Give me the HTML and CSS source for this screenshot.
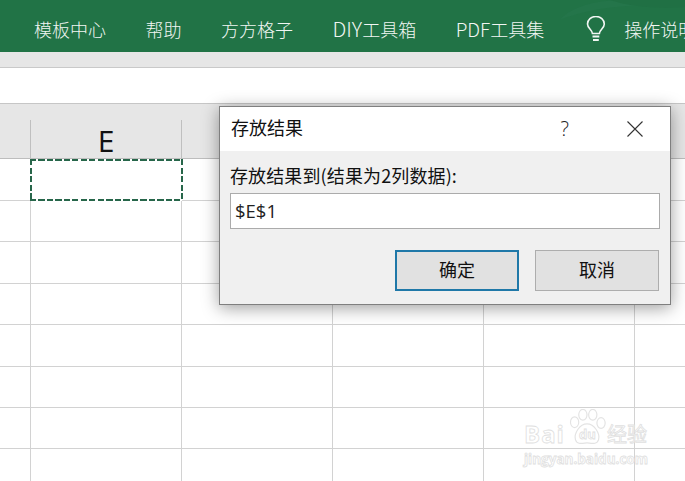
FILE: index.html
```html
<!DOCTYPE html>
<html lang="zh-CN">
<head>
<meta charset="utf-8">
<title>存放结果</title>
<link rel="stylesheet" href="styles.css">
</head>
<body>
<div class="app">
  <header class="ribbon">
    <svg class="ribbon-art" width="125" height="20" viewBox="0 0 125 20"><path d="M0 20C10 8 30 2 55 0H125V7C90 4 50 6 30 11C18 14 8 16 0 20Z" fill="#24754a"/><path d="M50 0C70 7 100 9 125 7V0Z" fill="#207044"/></svg>
    <nav class="tabs">
      <span>模板中心</span><span>帮助</span><span>方方格子</span><span><span class="lat-a">DIY</span>工具箱</span><span><span class="lat-b">PDF</span>工具集</span>
    </nav>
    <div class="tell">
      <svg class="bulb" width="20" height="26" viewBox="0 0 20 26" fill="none" stroke="#f1f6f3" stroke-width="1.600"><path d="M6.400 17.500C6 13.500 1.500 12.300 1.500 8A8.300 7.400 0 0 1 18.300 8C18.300 12.300 13.800 13.500 13.400 17.500Z"/><path d="M6.500 20.500H13.300M7 24H12.800" stroke-width="2"/></svg>
      <span>操作说明搜索</span>
    </div>
  </header>
  <div class="band"></div>
  <div class="formula"></div>
  <div class="sheet">
    <div class="head">
      <div class="hcell hcell-first"></div>
      <div class="hcell">E</div>
      <div class="hcell"></div>
      <div class="hcell"></div>
      <div class="hcell"></div>
      <div class="hcell"></div>
    </div>
    <div class="grid">
      <div class="cell cell-first"></div><div class="cell selected"></div><div class="cell"></div><div class="cell"></div><div class="cell"></div><div class="cell"></div>
      <div class="cell cell-first"></div><div class="cell"></div><div class="cell"></div><div class="cell"></div><div class="cell"></div><div class="cell"></div>
      <div class="cell cell-first"></div><div class="cell"></div><div class="cell"></div><div class="cell"></div><div class="cell"></div><div class="cell"></div>
      <div class="cell cell-first"></div><div class="cell"></div><div class="cell"></div><div class="cell"></div><div class="cell"></div><div class="cell"></div>
      <div class="cell cell-first"></div><div class="cell"></div><div class="cell"></div><div class="cell"></div><div class="cell"></div><div class="cell"></div>
      <div class="cell cell-first"></div><div class="cell"></div><div class="cell"></div><div class="cell"></div><div class="cell"></div><div class="cell"></div>
      <div class="cell cell-first"></div><div class="cell"></div><div class="cell"></div><div class="cell"></div><div class="cell"></div><div class="cell"></div>
      <div class="cell cell-first"></div><div class="cell"></div><div class="cell"></div><div class="cell"></div><div class="cell"></div><div class="cell"></div>
    </div>
  </div>

  <section class="dialog">
    <div class="dialog-title">
      <span class="title-text">存放结果</span>
      <span class="help">?</span>
      <svg class="close" width="16" height="16" viewBox="0 0 16 16" stroke="#333" stroke-width="1.100"><path d="M.5.5 15.500 15.500M15.500.5.5 15.500"/></svg>
    </div>
    <div class="dialog-body">
      <label class="field-label">存放结果到(结果为2列数据):</label>
      <div class="field">$E$1</div>
      <div class="actions">
        <button class="btn btn-default">确定</button>
        <button class="btn">取消</button>
      </div>
    </div>
  </section>

  <div class="watermark">
    <div class="wm-top">
      <span class="wm-word">Bai</span>
      <span class="wm-paw">
        <svg width="40" height="38" viewBox="0 0 48 46" fill="none" stroke="#e3e3e3" stroke-width="1.400"><ellipse cx="9" cy="16" rx="5" ry="6.500"/><ellipse cx="19" cy="7" rx="5" ry="6.500"/><ellipse cx="31" cy="7" rx="5" ry="6.500"/><ellipse cx="41" cy="17" rx="5" ry="6.500"/><path d="M24 18C33 18 40 30 38 37C36 44 28 41 24 41C20 41 12 44 10 37C8 30 15 18 24 18Z"/></svg>
        <span class="wm-du">du</span>
      </span>
      <span class="wm-cn">经验</span>
    </div>
    <div class="wm-url">jingyan.baidu.com</div>
  </div>
</div>
</body>
</html>
```
FILE: styles.css
```css
* { box-sizing: border-box; }
html, body { margin: 0; padding: 0; }
body {
  width: 685px;
  height: 481px;
  overflow: hidden;
  background: #fff;
  font-family: "Noto Sans CJK SC", "Open Sans", sans-serif;
}
.app { position: relative; width: 685px; height: 481px; overflow: hidden; }

.ribbon {
  position: relative;
  height: 52px;
  background: #217346;
  color: #f1f6f3;
  display: flex;
  align-items: center;
  padding: 5px 0 0 34px;
  font-size: 18px;
  font-weight: 300;
  white-space: nowrap;
  overflow: hidden;
}
.ribbon-art { position: absolute; right: 0; top: 0; }
.tabs { position: relative; display: flex; gap: 39.500px; }
.lat-a { font-size: 20.500px; line-height: 18px; }
.lat-b { font-size: 19px; line-height: 18px; }
.tell { position: relative; display: flex; align-items: center; gap: 18px; margin-left: 42px; }
.bulb { margin-top: 1px; }

.band { height: 16px; background: #e6e6e6; border-bottom: 1px solid #c9c9c9; }
.formula { height: 36px; background: #fff; border-bottom: 1px solid #c6c6c6; }

.sheet { height: 377px; }
.head {
  display: grid;
  grid-template-columns: 31px repeat(5, 151px);
  height: 55px;
  padding-top: 16px;
  background: #e6e6e6;
  border-bottom: 1px solid #bdbdbd;
}
.hcell {
  border-right: 1px solid #bfbfbf;
  font-family: "Open Sans", sans-serif;
  font-size: 30px;
  line-height: 42px;
  text-align: center;
  color: #111;
}
.grid {
  display: grid;
  grid-template-columns: 31px repeat(5, 151px);
  grid-template-rows: 42px;
  grid-auto-rows: 41.400px;
}
.cell { border-right: 1px solid #d2d2d2; border-bottom: 1px solid #d2d2d2; }
.selected {
  margin: 0 -1px 0 -1px;
  border: 0;
  background:
    repeating-linear-gradient(90deg, #27664a 0 6px, transparent 6px 8.500px) left top / 100% 2px no-repeat,
    repeating-linear-gradient(90deg, #27664a 0 6px, transparent 6px 8.500px) left bottom / 100% 2px no-repeat,
    repeating-linear-gradient(180deg, #27664a 0 6px, transparent 6px 8.500px) left top / 2px 100% no-repeat,
    repeating-linear-gradient(180deg, #27664a 0 6px, transparent 6px 8.500px) right top / 2px 100% no-repeat,
    #fff;
}

.dialog {
  position: absolute;
  left: 219px;
  top: 106px;
  width: 452px;
  height: 199px;
  border: 1px solid #7f7f7f;
  background: #f0f0f0;
  box-shadow: 0 3px 16px rgba(0, 0, 0, .38);
  display: flex;
  flex-direction: column;
  color: #111;
}
.dialog-title {
  height: 44px;
  flex: none;
  background: #fff;
  display: flex;
  align-items: center;
  padding: 0 27px 0 11px;
  font-size: 18px;
}
.title-text { flex: 1; margin-top: -4px; }
.help { font-family: "Open Sans", sans-serif; font-size: 20px; font-weight: 300; margin-right: 58px; margin-top: -2px; color: #222; }
.close { margin-top: -1px; }
.dialog-body { flex: 1; padding: 11px 10px 0 10px; display: flex; flex-direction: column; }
.field-label { font-size: 18px; line-height: 26px; height: 30px; white-space: nowrap; letter-spacing: .12px; }
.field {
  height: 36px;
  margin-top: 1px;
  background: #fff;
  border: 1px solid #ababab;
  padding: 0 4px;
  font-family: "Open Sans", sans-serif;
  font-size: 18.500px;
  line-height: 33px;
  color: #222;
}
.actions { display: flex; justify-content: flex-end; gap: 16px; margin-top: 21px; padding-right: 1px; }
.btn {
  width: 124px;
  height: 41px;
  padding: 0 0 4px;
  background: #e1e1e1;
  border: 1px solid #adadad;
  font: 400 18px "Noto Sans CJK SC", sans-serif;
  color: #111;
}
.btn-default { border: 2px solid #1f78a8; }

.watermark {
  position: absolute;
  left: 524px;
  top: 407px;
  width: 130px;
  color: #fff;
  text-align: left;
}
.wm-top { display: flex; align-items: flex-end; height: 42px; }
.wm-word, .wm-du, .wm-cn, .wm-url {
  font-family: "Open Sans", sans-serif;
  font-weight: 700;
  color: #fff;
  -webkit-text-stroke: .8px #e0e0e0;
}
.wm-word { font-size: 24px; line-height: 30px; letter-spacing: 1px; }
.wm-paw { position: relative; width: 40px; height: 38px; margin: 0 0 2px 2px; }
.wm-du { position: absolute; left: 12px; top: 16px; font-size: 13px; line-height: 18px; }
.wm-cn { font-family: "Noto Sans CJK SC", sans-serif; font-size: 20px; line-height: 30px; font-weight: 400; white-space: nowrap; }
.wm-url { font-size: 13.500px; line-height: 16px; margin-top: 2px; white-space: nowrap; }
```
